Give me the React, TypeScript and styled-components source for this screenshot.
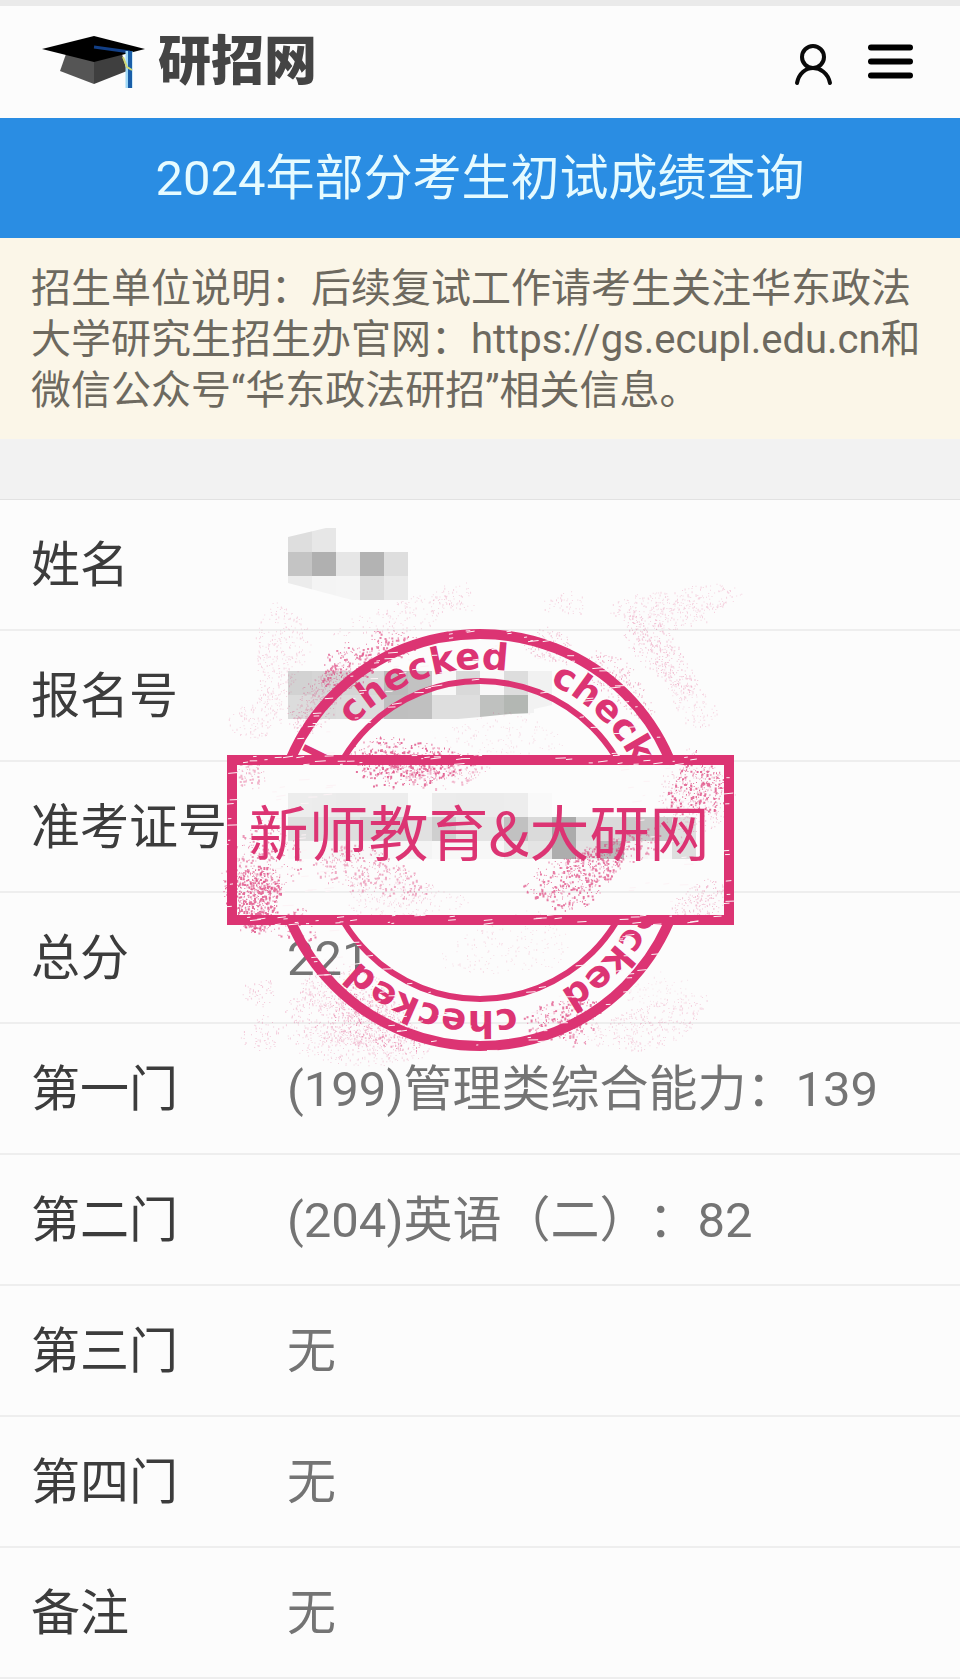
import React from 'react';
import styled, { createGlobalStyle } from 'styled-components';

const GlobalStyle = createGlobalStyle`
  *, *::before, *::after { box-sizing: border-box; }
  body {
    margin: 0;
    background: #fcfcfc;
    font-family: Roboto, "Noto Sans CJK SC", sans-serif;
    text-spacing-trim: space-all;
  }
`;

const Page = styled.div`
  border-top: 6px solid #eaeaea;
`;

const Header = styled.header`
  display: flex;
  align-items: center;
  justify-content: space-between;
  height: 112px;
  padding: 0 46px 0 40px;
`;

const Brand = styled.a`
  display: flex;
  align-items: center;
  gap: 10px;
  color: #444;
  font-size: 53px;
  font-weight: 900;
  line-height: 60px;
  text-decoration: none;
`;

const Actions = styled.nav`
  display: flex;
  gap: 29px;
`;

const IconButton = styled.button`
  display: block;
  padding: 0;
  border: 0;
  background: none;
  cursor: pointer;
  svg { display: block; }
`;

const TitleBar = styled.h1`
  margin: 0;
  padding: 30px 16px 29px;
  background: #2a8de3;
  color: #e6fbff;
  font-size: 49px;
  font-weight: 400;
  line-height: 61px;
  text-align: center;
`;

const Notice = styled.p`
  margin: 0;
  padding: 25px 31px 23px;
  background: #fbf6e8;
  color: #6d695f;
  font-size: 40px;
  line-height: 51px;
`;

const Gap = styled.div`
  height: 61px;
  background: #f2f2f2;
  border-bottom: 1px solid #e2e2e2;
`;

const Results = styled.main`
  position: relative;
`;

const Table = styled.table`
  width: 100%;
  border-collapse: separate;
  border-spacing: 0;
  font-size: 49px;
  line-height: 60px;
  text-align: left;
`;

const Label = styled.th`
  width: 287px;
  height: 131px;
  padding: 3px 0 0 31px;
  border-bottom: 2px solid #eeeeee;
  color: #3c3c3c;
  font-weight: 400;
  white-space: nowrap;
`;

const Value = styled.td`
  height: 131px;
  padding: 3px 0 0;
  border-bottom: 2px solid #eeeeee;
  color: #747474;
`;

const Mosaic = styled.svg`
  display: block;
  margin: 0 0 4px 1px;
`;

const StampLayer = styled.svg`
  position: absolute;
  top: 80px;
  left: 50%;
  transform: translateX(-50%);
  pointer-events: none;
`;

const PINK = '#dc3473';

/* ---------- pixelated private values ---------- */

type MosaicSpec = { rows: string[][]; clip: string; height: number };

const CELL = 24;

const nameMosaic: MosaicSpec = {
  height: 72,
  clip: '0,9 38,0 48,0 48,24 120,24 120,72 64,72 0,55',
  rows: [
    ['#dedede', '#e7e7e7'],
    ['#c4c4c4', '#b0b0b0', '#e6e6e6', '#b3b3b3', '#dedede'],
    ['#ececec', '#f4f4f4', '#f5f5f5', '#dcdcdc', '#e9e9e9'],
  ],
};

const numberMosaic: MosaicSpec = {
  height: 48,
  clip: '0,0 264,0 264,34 246,38 246,42 222,43 192,46 170,48 0,48',
  rows: [
    ['#d2d2d2', '#d5d5d5', '#d5d5d5', '#d8d8d8', '#bcbcbc', '#c2c2c2', '#f8f8f8', '#d9d9d9', '#f8f8f8', '#dddddd', '#f1f1f1'],
    ['#dcdcdc', '#dadada', '#dcdcdc', '#dcdcdc', '#bfbfbf', '#c0c0c0', '#dedede', '#dedede', '#bfc1bf', '#b3b7b3', '#f2f2f2'],
  ],
};

const ticketMosaic: MosaicSpec = {
  height: 66,
  clip: '0,0 408,0 408,66 0,66',
  rows: [
    ['#ededed', '#ececec', '#ebebeb', '#ededed', '#ededed', '#fbfbfb', '#ececec', '#ebebeb', '#ececec', '#ededed', '#f9f9f9'],
    ['#dfdfdf', '#dedede', '#dedede', '#d4d4d4', '#cfcfcf', '#e1e1e1', '#cfcfcf', '#e4e4e4', '#e4e4e4', '#c1c1c1', '#dadada', '#ababab', '#dddddd', '#dadada', '#c8c8c8', '#c8c8c8', '#e0e0e0'],
    ['#f8f8f8', '#f8f8f8', '#f7f7f7', '#f8f8f8', '#f8f8f8', '#f4f4f4', '#f8f8f8', '#f8f8f8', '#f7f7f7', '#e8e8e8', '#e4e4e4', '#adadad', '#e3e3e3', '#b9b9b9', '#f5f5f5', '#f8f8f8', '#dedede'],
  ],
};

function Redacted({ id, spec }: { id: string; spec: MosaicSpec }) {
  const cols = Math.max(...spec.rows.map((r) => r.length));
  return (
    <Mosaic width={cols * CELL} height={spec.height} aria-hidden="true" shapeRendering="crispEdges">
      <clipPath id={id}>
        <polygon points={spec.clip} />
      </clipPath>
      <g clipPath={`url(#${id})`}>
        {spec.rows.map((row, y) =>
          row.map((fill, x) => (
            <rect key={`${x}-${y}`} x={x * CELL} y={y * CELL} width={CELL} height={CELL} fill={fill} />
          )),
        )}
      </g>
    </Mosaic>
  );
}

/* ---------- stamp ---------- */

function createRandom(seed: number) {
  let s = seed;
  return () => {
    s = (s * 1664525 + 1013904223) % 4294967296;
    return s / 4294967296;
  };
}

// centre x, centre y, radius x, radius y, tilt in degrees, dots, opacity, largest dot
type Splash = [number, number, number, number, number, number, number, number];

const splashes: Splash[] = [
  [698, 786, 28, 30, 0, 260, 0.7, 2],
  [692, 796, 38, 42, 0, 300, 0.3, 1],
  [408, 762, 60, 24, 0, 420, 0.7, 2],
  [440, 770, 50, 16, 0, 240, 0.35, 2],
  [254, 896, 28, 32, 0, 560, 0.7, 2],
  [262, 860, 40, 32, -30, 240, 0.5, 2],
  [250, 774, 16, 16, 0, 70, 0.35, 2],
  [370, 872, 58, 22, 14, 330, 0.4, 2],
  [400, 900, 60, 20, 0, 200, 0.2, 1],
  [575, 878, 48, 26, -22, 400, 0.65, 2],
  [618, 850, 46, 16, -18, 160, 0.5, 2],
  [702, 900, 28, 18, -20, 170, 0.3, 1],
  [346, 668, 28, 22, -40, 190, 0.6, 2],
  [384, 648, 32, 18, -20, 130, 0.6, 2],
  [318, 700, 42, 20, -50, 360, 0.3, 1],
  [280, 655, 26, 52, 8, 320, 0.2, 1],
  [258, 716, 30, 20, -30, 120, 0.2, 1],
  [400, 616, 60, 16, -14, 150, 0.2, 1],
  [455, 597, 20, 16, 0, 60, 0.2, 1],
  [550, 646, 26, 16, 20, 150, 0.3, 1],
  [618, 682, 44, 18, 45, 200, 0.4, 1],
  [658, 650, 50, 20, 50, 340, 0.28, 1],
  [676, 606, 62, 20, -8, 380, 0.2, 1],
  [690, 700, 36, 16, 50, 140, 0.18, 1],
  [565, 604, 20, 12, 0, 50, 0.2, 1],
  [500, 735, 60, 22, 0, 150, 0.14, 1],
  [350, 1010, 62, 40, 20, 800, 0.26, 1],
  [375, 1022, 54, 20, 32, 300, 0.45, 1],
  [350, 1046, 74, 18, 8, 280, 0.22, 1],
  [260, 992, 18, 14, 0, 50, 0.25, 1],
  [262, 1034, 20, 18, 0, 60, 0.25, 1],
  [296, 925, 20, 18, 0, 70, 0.6, 2],
  [255, 926, 18, 8, 0, 36, 0.5, 2],
  [560, 1018, 38, 18, -18, 190, 0.65, 2],
  [575, 1028, 20, 20, 0, 70, 0.5, 2],
  [650, 1024, 60, 22, -16, 350, 0.2, 1],
  [655, 990, 40, 18, 0, 80, 0.13, 1],
  [510, 945, 62, 30, -8, 190, 0.15, 1],
];

const splashPaths = splashes.map(([cx, cy, rx, ry, tilt, dots, opacity, size], index) => {
  const rand = createRandom(97 + index * 7919);
  const t = (tilt * Math.PI) / 180;
  let d = '';
  for (let i = 0; i < dots; i += 1) {
    const angle = rand() * Math.PI * 2;
    const reach = Math.pow(rand(), 0.64) * (0.95 + 0.14 * Math.sin(angle * 3 + index)) + rand() * 0.12;
    const u = Math.cos(angle) * reach * rx;
    const v = Math.sin(angle) * reach * ry;
    const x = (cx + u * Math.cos(t) - v * Math.sin(t)).toFixed(1);
    const y = (cy + u * Math.sin(t) + v * Math.cos(t)).toFixed(1);
    const w = size === 2 && rand() > 0.7 ? 2 : 1;
    d += `M${x} ${y}h${w}v${rand() > 0.8 ? w + 1 : w}h${-w}z`;
  }
  return { d, opacity };
});

// thin worn-out streaks in the ink
const scratches = (() => {
  const rand = createRandom(4242);
  let d = '';
  const streak = (x: number, y: number) => {
    const len = 2 + rand() * 9;
    d += `M${x.toFixed(1)} ${y.toFixed(1)}l${len.toFixed(1)} ${(-len * 0.16 * rand()).toFixed(1)}`;
  };
  for (let i = 0; i < 80; i += 1) {
    const a = rand() * Math.PI * 2;
    const r = 201 + rand() * 10;
    streak(480 + Math.cos(a) * r - 3, 840 + Math.sin(a) * r);
  }
  for (let i = 0; i < 40; i += 1) {
    const a = rand() * Math.PI * 2;
    streak(480 + Math.cos(a) * 160 - 3, 840 + Math.sin(a) * 160);
  }
  for (let i = 0; i < 80; i += 1) {
    const a = rand() * Math.PI * 2;
    const r = 171 + rand() * 24;
    streak(480 + Math.cos(a) * r - 3, 840 + Math.sin(a) * r);
  }
  for (let i = 0; i < 32; i += 1) {
    streak(235 + rand() * 480, 755 + rand() * 10);
    streak(235 + rand() * 480, 915 + rand() * 10);
  }
  for (let i = 0; i < 9; i += 1) {
    streak(226 + rand() * 5, 770 + rand() * 140);
    streak(723 + rand() * 5, 770 + rand() * 140);
  }
  return d;
})();

const words = [-48, 24, 95, 168, 243];
const TEXT_RADIUS = 171;

function wordArc(start: number) {
  const point = (deg: number) => {
    const a = (deg * Math.PI) / 180;
    return `${(480 + TEXT_RADIUS * Math.sin(a)).toFixed(2)} ${(840 - TEXT_RADIUS * Math.cos(a)).toFixed(2)}`;
  };
  return `M${point(start)}A${TEXT_RADIUS} ${TEXT_RADIUS} 0 0 1 ${point(start + 66)}`;
}

function Stamp() {
  return (
    <StampLayer width="560" height="520" viewBox="200 580 560 520">
      <defs>
        <clipPath id="outside-plate">
          <path d="M200 580h560v176h-560zM200 924h560v176h-560z" />
        </clipPath>
        {words.map((start) => (
          <path key={start} id={`arc${start}`} d={wordArc(start)} />
        ))}
      </defs>
      <g fill={PINK}>
        {splashPaths.map((p, i) => (
          <path key={i} d={p.d} opacity={p.opacity} />
        ))}
      </g>
      <g clipPath="url(#outside-plate)">
        <circle cx="480" cy="840" r="206" fill="none" stroke={PINK} strokeWidth="10" />
        <circle cx="480" cy="840" r="159" fill="none" stroke={PINK} strokeWidth="6" />
        <g fill={PINK} fontFamily='"DejaVu Sans", sans-serif' fontWeight="700" fontSize="37">
          {words.map((start) => (
            <text key={start}>
              <textPath href={`#arc${start}`}>checked</textPath>
            </text>
          ))}
        </g>
      </g>
      <rect x="232" y="760" width="497" height="160" fill="none" stroke={PINK} strokeWidth="10" />
      <path d={scratches} stroke="#fdf3f6" strokeWidth="1" fill="none" />
      <text
        x="479"
        y="856"
        textAnchor="middle"
        fill={PINK}
        fontSize="60"
        fontFamily='"Noto Sans CJK SC", sans-serif'
      >
        新师教育&amp;大研网
      </text>
    </StampLayer>
  );
}

/* ---------- header drawings ---------- */

function CapLogo() {
  return (
    <svg width="108" height="56" viewBox="40 34 108 56" aria-hidden="true">
      <path d="M66 54L60 71L94 84V58z" fill="#555" />
      <path d="M94 58V84L127 71L122 54z" fill="#3f3f3f" />
      <path d="M42 49L94 36L145 49L94 62z" fill="#000" />
      <path d="M94 47L130 52" stroke="#123f86" strokeWidth="3" fill="none" />
      <path d="M129 51V88" stroke="#9fd8f7" strokeWidth="7" />
      <path d="M130 51V88" stroke="#1a5ea8" strokeWidth="4" />
      <path d="M123 57L127 67L132 70" stroke="#cfd873" strokeWidth="2" fill="none" />
    </svg>
  );
}

function UserIcon() {
  return (
    <svg width="48" height="56" viewBox="789 34 48 56" fill="none" stroke="#0a0a0a" strokeWidth="4" strokeLinecap="round" aria-hidden="true">
      <circle cx="813" cy="57" r="11" />
      <path d="M797 83C799 73 806 68 813 68S828 73 830 83" />
    </svg>
  );
}

function MenuIcon() {
  return (
    <svg width="48" height="56" viewBox="866 34 48 56" stroke="#000" strokeWidth="6" strokeLinecap="round" aria-hidden="true">
      <path d="M871 47.500H910M871 61.500H910M871 75.500H910" />
    </svg>
  );
}

const results: { label: string; value: React.ReactNode }[] = [
  { label: '姓名', value: <Redacted id="clip-name" spec={nameMosaic} /> },
  { label: '报名号', value: <Redacted id="clip-number" spec={numberMosaic} /> },
  { label: '准考证号', value: <Redacted id="clip-ticket" spec={ticketMosaic} /> },
  { label: '总分', value: '221' },
  { label: '第一门', value: '(199)管理类综合能力：139' },
  { label: '第二门', value: '(204)英语（二）：82' },
  { label: '第三门', value: '无' },
  { label: '第四门', value: '无' },
  { label: '备注', value: '无' },
];

export default function App() {
  return (
    <Page lang="zh-CN">
      <GlobalStyle />
      <Header>
        <Brand href="#">
          <CapLogo />
          研招网
        </Brand>
        <Actions>
          <IconButton type="button" aria-label="用户">
            <UserIcon />
          </IconButton>
          <IconButton type="button" aria-label="菜单">
            <MenuIcon />
          </IconButton>
        </Actions>
      </Header>
      <TitleBar>2024年部分考生初试成绩查询</TitleBar>
      <Notice>
        招生单位说明：后续复试工作请考生关注华东政法大学研究生招生办官网：https://gs.ecupl.edu.cn和微信公众号“华东政法研招”相关信息。
      </Notice>
      <Gap />
      <Results>
        <Table>
          <tbody>
            {results.map((row) => (
              <tr key={row.label}>
                <Label scope="row">{row.label}</Label>
                <Value>{row.value}</Value>
              </tr>
            ))}
          </tbody>
        </Table>
        <Stamp />
      </Results>
    </Page>
  );
}
